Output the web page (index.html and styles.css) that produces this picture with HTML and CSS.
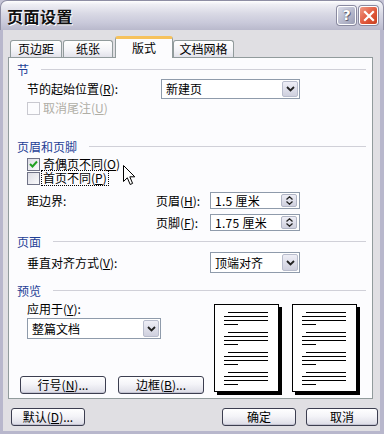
FILE: index.html
```html
<!DOCTYPE html>
<html lang="zh-CN">
<head>
<meta charset="utf-8">
<title>页面设置</title>
<link rel="stylesheet" href="styles.css">
</head>
<body>
<div class="window">
  <div class="titlebar">
    <span class="title">页面设置</span>
    <div class="tb-buttons">
      <span class="tb-btn help">?</span>
      <span class="tb-btn close"><svg width="12" height="12" viewBox="0 0 12 12"><path d="M2 2 L10 10 M10 2 L2 10" stroke="#fff" stroke-width="2.2" stroke-linecap="square"/></svg></span>
    </div>
  </div>
  <div class="frame">
    <div class="client">
      <div class="tabs">
        <div class="tab t1">页边距</div>
        <div class="tab t2">纸张</div>
        <div class="tab t3 active">版式</div>
        <div class="tab t4">文档网格</div>
      </div>
      <div class="panel">
        <div class="group-hdr"><span>节</span><i class="rule"></i></div>
        <div class="row r-start">
          <span class="lbl w134">节的起始位置(<u>R</u>):</span>
          <div class="select w139"><span class="val">新建页</span><span class="dd"><svg width="9" height="6" viewBox="0 0 9 6"><path d="M1 1 L4.5 4.5 L8 1" fill="none" stroke="#222" stroke-width="1.8"/></svg></span></div>
        </div>
        <div class="row r-cb disabled">
          <span class="cb off"></span><span class="cb-text">取消尾注(<u>U</u>)</span>
        </div>

        <div class="group-hdr g2"><span>页眉和页脚</span><i class="rule"></i></div>
        <div class="row r-cb2 cb-first">
          <span class="cb checked"><svg width="11" height="11" viewBox="0 0 11 11"><path d="M2 5 L4.5 7.5 L9 2.5" fill="none" stroke="#21a121" stroke-width="2"/></svg></span><span class="cb-text">奇偶页不同(<u>O</u>)</span>
        </div>
        <div class="row r-cb2">
          <span class="cb"></span><span class="cb-text focus">首页不同(<u>P</u>)</span>
        </div>
        <div class="row r-spin first">
          <span class="lbl w129">距边界:</span>
          <span class="lbl w54">页眉(<u>H</u>):</span>
          <div class="spin"><span class="val">1.5 厘米</span><span class="spin-btns"><span class="sb"><svg width="7" height="4" viewBox="0 0 7 4"><path d="M0.5 3.5 L3.5 0.8 L6.5 3.5" fill="none" stroke="#222" stroke-width="1.3"/></svg></span><span class="sb"><svg width="7" height="4" viewBox="0 0 7 4"><path d="M0.5 0.5 L3.5 3.2 L6.5 0.5" fill="none" stroke="#222" stroke-width="1.3"/></svg></span></span></div>
        </div>
        <div class="row r-spin second">
          <span class="lbl w129"></span>
          <span class="lbl w54">页脚(<u>F</u>):</span>
          <div class="spin"><span class="val">1.75 厘米</span><span class="spin-btns"><span class="sb"><svg width="7" height="4" viewBox="0 0 7 4"><path d="M0.5 3.5 L3.5 0.8 L6.5 3.5" fill="none" stroke="#222" stroke-width="1.3"/></svg></span><span class="sb"><svg width="7" height="4" viewBox="0 0 7 4"><path d="M0.5 0.5 L3.5 3.2 L6.5 0.5" fill="none" stroke="#222" stroke-width="1.3"/></svg></span></span></div>
        </div>

        <div class="group-hdr g3"><span>页面</span><i class="rule"></i></div>
        <div class="row r-valign">
          <span class="lbl w183">垂直对齐方式(<u>V</u>):</span>
          <div class="select w90"><span class="val">顶端对齐</span><span class="dd"><svg width="9" height="6" viewBox="0 0 9 6"><path d="M1 1 L4.5 4.5 L8 1" fill="none" stroke="#222" stroke-width="1.8"/></svg></span></div>
        </div>

        <div class="group-hdr g4"><span>预览</span><i class="rule"></i></div>
        <div class="preview">
          <div class="pv-left">
            <div class="pv-label">应用于(<u>Y</u>):</div>
            <div class="select w134 pv-select"><span class="val">整篇文档</span><span class="dd"><svg width="9" height="6" viewBox="0 0 9 6"><path d="M1 1 L4.5 4.5 L8 1" fill="none" stroke="#222" stroke-width="1.8"/></svg></span></div>
            <div class="pv-buttons">
              <span class="btn w86">行号(<u>N</u>)...</span>
              <span class="btn w86">边框(<u>B</u>)...</span>
            </div>
          </div>
          <div class="pages">
            <svg class="page" width="68" height="91" viewBox="0 0 68 91">
              <rect x="3" y="3" width="65" height="88" fill="#000"/>
              <rect x="0.5" y="0.5" width="64" height="87" fill="#fff" stroke="#000"/>
              <g stroke="#000" stroke-width="1.2">
                <path d="M14 8.5H54M10 12.5H54M10 16.5H54M10 20.5H24"/>
                <path d="M14 28.5H54M10 32.5H54M10 36.5H54M10 40.5H24"/>
                <path d="M14 48.5H54M10 52.5H54M10 56.5H54M10 60.5H24"/>
                <path d="M14 68.5H54M10 72.5H54M10 76.5H54M10 80.5H24"/>
              </g>
            </svg>
            <svg class="page" width="68" height="91" viewBox="0 0 68 91">
              <rect x="3" y="3" width="65" height="88" fill="#000"/>
              <rect x="0.5" y="0.5" width="64" height="87" fill="#fff" stroke="#000"/>
              <g stroke="#000" stroke-width="1.2">
                <path d="M14 8.5H54M10 12.5H54M10 16.5H54M10 20.5H24"/>
                <path d="M14 28.5H54M10 32.5H54M10 36.5H54M10 40.5H24"/>
                <path d="M14 48.5H54M10 52.5H54M10 56.5H54M10 60.5H24"/>
                <path d="M14 68.5H54M10 72.5H54M10 76.5H54M10 80.5H24"/>
              </g>
            </svg>
          </div>
        </div>
      </div>
      <div class="bottom">
        <span class="btn b-default">默认(<u>D</u>)...</span>
        <span class="spacer"></span>
        <span class="btn b-ok">确定</span>
        <span class="btn b-cancel">取消</span>
      </div>
    </div>
  </div>
  <svg class="cursor" width="13" height="21" viewBox="0 0 13 21"><path d="M0.5 0.5 L0.5 16.5 L4.3 12.8 L7.2 19.5 L9.6 18.4 L6.8 11.8 L11.8 11.8 Z" fill="#fff" stroke="#000" stroke-width="1" stroke-linejoin="miter"/></svg>
</div>
</body>
</html>
```
FILE: styles.css
```css
html, body {
  margin: 0;
  padding: 0;
  background: #e0dfe3;
}
body {
  font-family: "Noto Sans CJK SC", "Noto Sans", sans-serif;
  font-size: 12px;
  color: #000;
}
u { text-decoration: underline; text-underline-offset: 1px; }

.window {
  position: relative;
  width: 384px;
  height: 434px;
  display: flex;
  flex-direction: column;
  overflow: hidden;
  background: #c6c5d7;
}

.titlebar {
  height: 30px;
  flex: none;
  box-sizing: border-box;
  display: flex;
  align-items: center;
  padding: 0 6px 0 6px;
  border-radius: 7px 7px 0 0;
  border: 1px solid #8e8ea4;
  border-bottom: none;
  background: linear-gradient(#ffffff 0%, #eeeef4 12%, #d8d8e4 45%, #c9c9da 75%, #b9b9cc 100%);
}
.title {
  font-weight: bold;
  font-size: 16px;
  line-height: 20px;
  color: #111;
  letter-spacing: 0.5px;
  text-shadow: 1px 1px 0 #fff;
}
.tb-buttons {
  margin-left: auto;
  display: flex;
  gap: 3px;
  margin-right: -1px;
}
.tb-btn {
  width: 19px;
  height: 19px;
  box-sizing: border-box;
  border: 1px solid #fff;
  border-radius: 3px;
  display: flex;
  align-items: center;
  justify-content: center;
  box-shadow: 0 0 0 1px #8a8aa0;
}
.help {
  background: linear-gradient(135deg, #d9dbe8 0%, #b4b6ca 60%, #9a9db4 100%);
  color: #fff;
  font-weight: bold;
  font-size: 14px;
  line-height: 17px;
  font-family: "DejaVu Sans", sans-serif;
  text-shadow: 0 0 1px #556, 1px 1px 0 #667;
}
.close {
  background: linear-gradient(135deg, #f09a86 0%, #e0583c 55%, #c8401f 100%);
}

.frame {
  flex: 1;
  display: flex;
  border-left: 3px solid #b8b7cc;
  border-right: 4px solid #b8b7cc;
  border-bottom: 3px solid #b8b7cc;
  box-shadow: inset 1px 0 #8e8ea4;
}
.client {
  flex: 1;
  background: #e0dfe3;
  padding: 6px 0 0 5px;
  display: flex;
  flex-direction: column;
}

/* tabs */
.tabs {
  display: flex;
  align-items: flex-end;
  height: 21px;
  position: relative;
  z-index: 2;
}
.tab {
  box-sizing: border-box;
  height: 17px;
  border: 1px solid #919b9c;
  border-bottom: none;
  border-radius: 3px 3px 0 0;
  background: linear-gradient(#ffffff, #f3f3f7 60%, #e2e2ea);
  text-align: center;
  line-height: 16px;
  font-size: 12px;
}
.t1 { width: 52px; margin-left: 2px; }
.t2 { width: 50px; margin-left: 1px; }
.t3 { width: 58px; margin-left: 2px; }
.t4 { width: 61px; }
.tab.active {
  height: 22px;
  margin-bottom: -1px;
  background: #fcfcfe;
  border-top: 3px solid #f6c25c;
  box-shadow: inset 0 -1px 0 #fcfcfe;
  line-height: 17px;
}

.panel {
  width: 365px;
  height: 342px;
  box-sizing: border-box;
  border: 1px solid #919b9c;
  background: #fcfcfe;
  padding: 4px 0 0 8px;
  display: flex;
  flex-direction: column;
}

.group-hdr {
  display: flex;
  align-items: center;
  height: 16px;
  color: #1f3f96;
  line-height: 16px;
  flex: none;
}
.group-hdr .rule {
  flex: 1;
  height: 1px;
  background: #d0d0d8;
  margin: 0 6px 2px 12px;
}
.g2 { margin-top: 23px; }
.g3 { margin-top: 3px; }
.g4 { margin-top: 10px; }

.row {
  display: flex;
  align-items: center;
  padding-left: 10px;
  flex: none;
  line-height: 14px;
}
.lbl { flex: none; white-space: nowrap; }
.w134 { width: 134px; }
.w129 { width: 129px; }
.w54 { width: 54px; }
.w183 { width: 183px; }
.w139 { width: 139px; }
.w90 { width: 90px; }
.w86 { width: 86px; }

.r-start { margin-top: 1px; height: 20px; }
.r-cb { margin-top: 1px; height: 16px; }
.r-cb2 { height: 14px; }
.cb-first { margin-top: 2px; }
.r-spin.first { margin-top: 7px; height: 17px; }
.r-spin.second { margin-top: 5px; height: 17px; }
.r-valign { margin-top: 2px; height: 21px; }

.select {
  flex: none;
  box-sizing: border-box;
  height: 100%;
  border: 1px solid #8f9bab;
  background: #fff;
  display: flex;
  align-items: center;
  padding: 1px;
}
.select .val {
  flex: 1;
  padding-left: 3px;
  line-height: 16px;
}
.dd {
  width: 16px;
  align-self: stretch;
  box-sizing: border-box;
  border: 1px solid #b8bccc;
  border-radius: 2px;
  background: linear-gradient(#eeeef6, #cfd0de);
  display: flex;
  align-items: center;
  justify-content: center;
}

.cb {
  width: 13px;
  height: 13px;
  box-sizing: border-box;
  border: 1px solid #6f7286;
  background: linear-gradient(135deg, #dcdce4, #fafafc);
  flex: none;
  display: flex;
  align-items: center;
  justify-content: center;
}
.cb.off { border-color: #c9c9d0; background: #fcfcfe; }
.cb-text { margin-left: 3px; white-space: nowrap; }
.disabled { color: #b0aea6; }
.focus {
  outline: 1px dotted #000;
  outline-offset: 0px;
  padding: 0 1px;
  margin-left: 2px;
}

.spin {
  width: 90px;
  height: 100%;
  box-sizing: border-box;
  border: 1px solid #8f9bab;
  background: #fff;
  display: flex;
  align-items: center;
  padding: 1px 2px 1px 1px;
  flex: none;
}
.spin .val {
  flex: 1;
  padding-left: 3px;
  line-height: 14px;
  letter-spacing: 0.3px;
}
.spin-btns {
  width: 14px;
  align-self: stretch;
  display: flex;
  flex-direction: column;
  border: 1px solid #b0b4c4;
  border-radius: 2px;
  background: linear-gradient(#eeeef6, #cfd0de);
}
.sb {
  flex: 1;
  display: flex;
  align-items: center;
  justify-content: center;
}

.preview {
  display: flex;
  flex: none;
}
.pv-left {
  width: 197px;
  flex: none;
  display: flex;
  flex-direction: column;
}
.pv-label {
  padding-left: 10px;
  margin-top: 2px;
  height: 16px;
  line-height: 16px;
}
.pv-select {
  margin-top: 1px;
  margin-left: 10px;
  height: 21px;
}
.pv-buttons {
  margin-top: 37px;
  margin-left: 3px;
  display: flex;
  gap: 12px;
}
.btn {
  box-sizing: border-box;
  height: 18px;
  border: 1px solid #3c3e50;
  border-radius: 3px;
  background: linear-gradient(#ffffff 0%, #f4f4f8 45%, #dcdce6 100%);
  box-shadow: inset 0 -1px 0 #c4c4d2;
  display: flex;
  align-items: center;
  justify-content: center;
  line-height: 14px;
  white-space: nowrap;
  flex: none;
}
.pages {
  display: flex;
  gap: 10px;
  margin-top: 5px;
}
.page { display: block; }

.bottom {
  display: flex;
  margin-top: 9px;
  height: 18px;
  width: 370px;
}
.b-default { width: 74px; margin-left: 3px; }
.spacer { flex: 1; }
.b-ok { width: 74px; }
.b-cancel { width: 72px; margin-left: 10px; }

.cursor {
  position: absolute;
  left: 123px;
  top: 165px;
}
```
